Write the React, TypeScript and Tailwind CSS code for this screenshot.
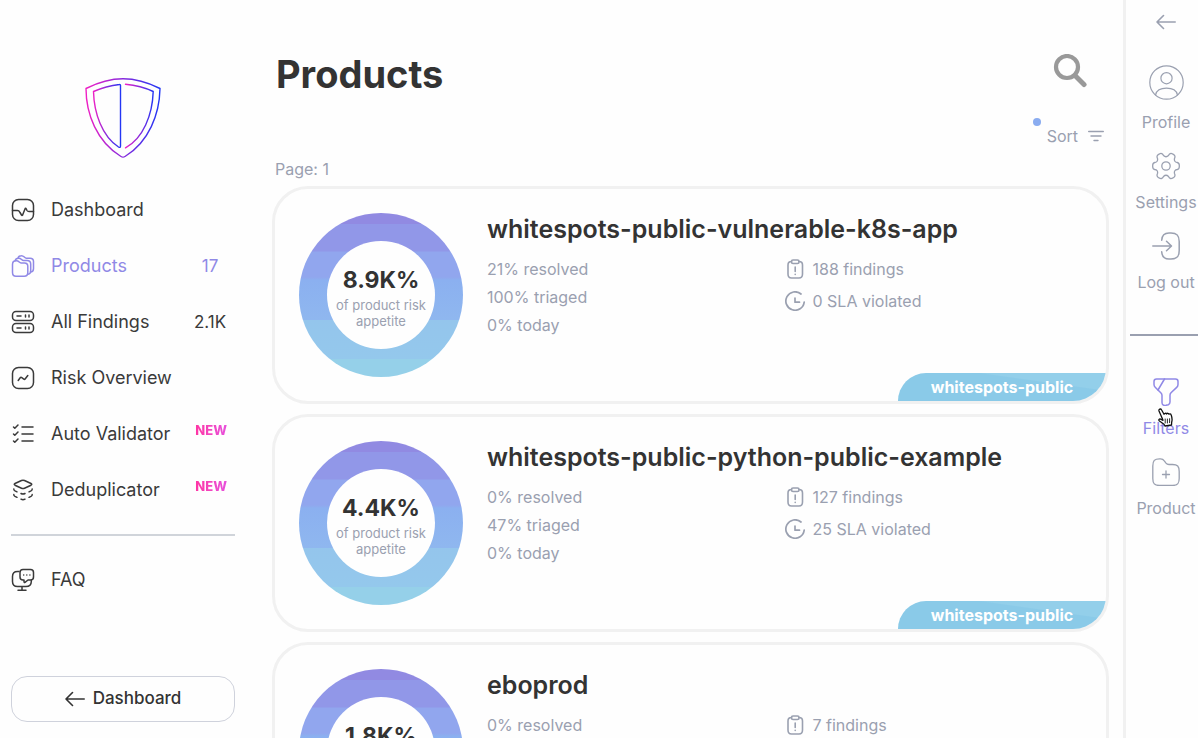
import type { ReactNode } from 'react';

type IconProps = { children: ReactNode; size?: string; weight?: number; box?: string };

function Icon({ children, size = 'size-6', weight = 1.5, box = '0 0 24 24' }: IconProps) {
  return (
    <svg
      viewBox={box}
      className={`${size} shrink-0`}
      fill="none"
      stroke="currentColor"
      strokeWidth={weight}
      strokeLinecap="round"
      strokeLinejoin="round"
      aria-hidden="true"
    >
      {children}
    </svg>
  );
}

function Logo() {
  return (
    <svg viewBox="0 0 76 80" className="h-20 w-[76px]" fill="none" strokeWidth="1.4" strokeLinejoin="round" strokeLinecap="round" aria-hidden="true">
      <defs>
        <linearGradient id="outer" gradientUnits="userSpaceOnUse" x1="1" y1="0" x2="75" y2="0">
          <stop offset="0" stopColor="#f01fc4" />
          <stop offset="1" stopColor="#2036f5" />
        </linearGradient>
        <linearGradient id="left" gradientUnits="userSpaceOnUse" x1="8" y1="0" x2="36" y2="0">
          <stop offset="0" stopColor="#f01fc4" />
          <stop offset="1" stopColor="#2036f5" />
        </linearGradient>
        <linearGradient id="right" gradientUnits="userSpaceOnUse" x1="40" y1="0" x2="69" y2="0">
          <stop offset="0" stopColor="#f01fc4" />
          <stop offset="1" stopColor="#2036f5" />
        </linearGradient>
      </defs>
      <path stroke="url(#outer)" d="M1 10.5C12 5 25 .8 38 .8S64 5 75 10.5C74.500 36 64 64 40 78.500Q38 79.800 36 78.500C12 64 1 36 1 10.500Z" />
      <path stroke="url(#left)" d="M34.500 6.500C25.500 7.500 16.500 10 8.500 13.500C9 35 17 58 33.500 69Q35.500 70.200 35.500 68V7.500Q35.500 6.300 34.500 6.500Z" />
      <path stroke="url(#right)" d="M40.500 6.200C50 7 60 9.500 68.200 13.500C67.500 37 58 60.500 40.500 69.800" />
    </svg>
  );
}

const icons = {
  dashboard: (
    <Icon>
      <rect x="1.500" y="1.500" width="21" height="21" rx="6" />
      <path d="M1.500 12.500H6.500C8 12.500 8.200 13 9 14.500L10.500 17C11 17.700 11.500 17.500 11.800 16.500L14 11C14.300 10.200 14.800 10 15.300 11L16 12.500C16.500 13.400 17 13.500 18 13.500H22.500" />
    </Icon>
  ),
  products: (
    <Icon>
      <path d="M1.500 10.500C1.500 8 2.700 6.800 5 6.800C8 6.500 8.200 9 10 9H13.500C15.700 9 16.800 10.100 16.800 12.300V18.500C16.800 21 15.700 22.300 13.200 22.300H5C2.700 22.300 1.500 21 1.500 18.500Z" />
      <path d="M4.200 6.700C4.500 5 5.700 4.200 7.500 4.200C10.300 4 10.600 6.500 12.500 6.500H16C18.400 6.500 19.700 7.600 19.700 10V16.500C19.700 18.700 18.800 20 17 20.200" />
      <path d="M7 4.200C7.300 2.500 8.500 1.700 10.300 1.700C13 1.500 13.400 4.200 15.300 4.200H19C21.300 4.200 22.500 5.300 22.500 7.500V14.500C22.500 16.500 21.700 17.700 20 18" />
    </Icon>
  ),
  findings: (
    <Icon>
      <rect x="1.500" y="1.500" width="21" height="9" rx="3.500" />
      <rect x="1.500" y="13.500" width="21" height="9" rx="3.500" />
      <path d="M6 6h4M14.500 5v2M18 5v2M6 18h4M14.500 17v2M18 17v2" />
    </Icon>
  ),
  risk: (
    <Icon>
      <rect x="1.500" y="1.500" width="21" height="21" rx="6" />
      <path d="M7.200 14.500L9.200 11.800Q10 10.900 10.800 11.700L12.800 13.200Q13.600 13.700 14.300 12.800L16.800 9.500" />
    </Icon>
  ),
  validator: (
    <Icon>
      <path d="M11 5h11M11 12h11M11 19h11M2.500 5l1.300 1.300L7 3M2.500 12l1.300 1.300L7 10M2.500 19l1.300 1.300L7 17" />
    </Icon>
  ),
  dedup: (
    <Icon>
      <path d="M10.500 2.500Q12 1.800 13.500 2.500L20 5.500Q21.500 6.300 20 7.200L13.500 10.200Q12 10.900 10.500 10.200L4 7.200Q2.500 6.300 4 5.500Z" />
      <path d="M2.800 11Q2.600 12 4 12.800L6 13.800M21.200 11Q21.400 12 20 12.800L18 13.800M10 15.500Q12 16.700 14 15.500M2.800 16.500Q2.600 17.500 4 18.300L6 19.300M21.200 16.500Q21.400 17.500 20 18.300L18 19.300M10 21.200Q12 22.400 14 21.200" />
    </Icon>
  ),
  faq: (
    <Icon>
      <path d="M8 3.500H6.500C3 3.500 1.500 5.200 1.500 8.500V13.500C1.500 17 3 18.500 6.500 18.500H15C18.500 18.500 20.300 17 20.300 13.500V12.500M11 18.500V22.200M7 22.200h8" />
      <path d="M12 1.500H19.500Q22.500 1.500 22.500 4.500V9Q22.500 12 19.500 12H17L14 14.300Q13 14.800 13 13.500V12H12Q9 12 9 9V4.500Q9 1.500 12 1.500Z" />
      <path d="M12.700 7h.01M15.800 7h.01M18.900 7h.01" />
    </Icon>
  ),
};

const navItems = [
  { label: 'Dashboard', icon: icons.dashboard },
  { label: 'Products', icon: icons.products, count: '17', active: true },
  { label: 'All Findings', icon: icons.findings, count: '2.1K' },
  { label: 'Risk Overview', icon: icons.risk },
  { label: 'Auto Validator', icon: icons.validator, fresh: true },
  { label: 'Deduplicator', icon: icons.dedup, fresh: true },
];

type NavProps = { label: string; icon: ReactNode; count?: string; active?: boolean; fresh?: boolean };

function NavLink({ label, icon, count, active, fresh }: NavProps) {
  return (
    <a
      href="#"
      aria-current={active ? 'page' : undefined}
      className={`flex h-14 items-center text-lg ${active ? 'text-[#9089e6]' : 'text-[#3a3a3a]'}`}
    >
      {icon}
      <span className="ml-4 flex-1 whitespace-nowrap">{label}</span>
      {count && <span className="w-[50px] text-center text-[17px]">{count}</span>}
      {fresh && (
        <span className="mr-2 mb-2 bg-linear-to-r from-[#ff34a4] to-[#e750dc] bg-clip-text text-[13px] font-extrabold text-transparent">
          NEW
        </span>
      )}
    </a>
  );
}

function BackArrow() {
  return (
    <Icon size="h-4 w-5" box="0 0 20 16" weight={1.6}>
      <path d="M19.200 8H1M7.500 1.500L1 8L7.500 14.500" />
    </Icon>
  );
}

const products = [
  { name: 'whitespots-public-vulnerable-k8s-app', risk: '8.9K%', resolved: '21%', triaged: '100%', findings: '188', sla: '0' },
  { name: 'whitespots-public-python-public-example', risk: '4.4K%', resolved: '0%', triaged: '47%', findings: '127', sla: '25' },
  { name: 'eboprod', risk: '1.8K%', resolved: '0%', triaged: '0%', findings: '7', sla: '0' },
];

function ProductCard({ product }: { product: (typeof products)[number] }) {
  return (
    <article className="relative flex shrink-0 gap-6 overflow-hidden rounded-[36px] border-3 border-[#f1f1f1] p-6">
      <div className="flex size-[164px] shrink-0 items-center justify-center rounded-full bg-[linear-gradient(#918ae2_7%,#9197e8_7%,#9197e8_23%,#91a6ee_24%,#91a6ee_39%,#8bb0f0_41%,#8fb7ef_65%,#94c5ec_65%,#94c8ec_89%,#95d0e9_89%)]">
        <div className="flex size-[108px] flex-col items-center justify-center gap-[3px] rounded-full bg-[#fefefe] pt-1 text-center">
          <strong className="text-[23px] leading-7 font-bold">{product.risk}</strong>
          <span className="text-[13px] leading-4 text-[#9aa0b0]">
            of product risk
            <br />
            appetite
          </span>
        </div>
      </div>
      <div className="min-w-0 flex-1">
        <h2 className="text-[25px] leading-8 font-semibold whitespace-nowrap">{product.name}</h2>
        <div className="mt-2 grid grid-cols-2 text-base text-[#9aa0b0]">
          <ul className="pt-0.5 leading-7">
            <li>{product.resolved} resolved</li>
            <li>{product.triaged} triaged</li>
            <li>0% today</li>
          </ul>
          <ul className="leading-8">
            <li className="flex items-center gap-2">
              <Icon size="size-5" box="0 0 20 20" weight={1.6}>
                <path d="M6.500 2.500C4 2.500 3 3.500 3 6V15C3 17.700 4 19 6.500 19H14C16.500 19 17.500 17.700 17.500 15V6C17.500 3.500 16.500 2.500 14 2.500" />
                <rect x="6.500" y="1" width="7.500" height="3.500" rx="1.500" />
                <path d="M10.200 8v4.500M10.200 15.400v.1" />
              </Icon>
              {product.findings} findings
            </li>
            <li className="flex items-center gap-2">
              <Icon size="size-5" box="0 0 20 20" weight={1.7}>
                <path d="M16 3A9.200 9.200 0 1 0 19.200 11" />
                <path d="M10 7v4.200h4.500" />
              </Icon>
              {product.sla} SLA violated
            </li>
          </ul>
        </div>
      </div>
      <a
        href="#"
        className="absolute right-0 bottom-0 flex h-7 w-52 items-center justify-center rounded-tl-[28px] bg-[linear-gradient(188deg,#93cfea_30%,#8acae8_32%)] text-base font-bold text-white"
      >
        whitespots-public
      </a>
    </article>
  );
}

function RailItem({ label, children, active }: { label: string; children: ReactNode; active?: boolean }) {
  return (
    <a href="#" className={`relative flex flex-col items-center gap-2.5 text-base leading-6 ${active ? 'text-[#9089e6]' : 'text-[#9aa0b0]'}`}>
      {children}
      <span className="whitespace-nowrap">{label}</span>
    </a>
  );
}

function HandPointer() {
  return (
    <svg viewBox="0 0 15 19" className="absolute top-[30px] left-8 h-[19px] w-[15px]" fill="#fff" stroke="#111" strokeWidth="1.300" strokeLinejoin="round" strokeLinecap="round" aria-hidden="true">
      <path d="M4.300 10.500L1 3C.5 1.200 2.700 .2 3.500 1.800L6 6.300C6.300 5.100 7.900 4.900 8.500 6C9 5 10.400 5 10.900 6.200C11.600 5.500 12.900 5.900 13.200 7C14.200 9.700 14.400 11.700 13.700 14L13.500 17L7 18L6 16.200L1.400 13C.2 11.900 1.300 10.600 2.700 11.200L5 12.300Z" />
      <path d="M7.200 11v4M9.400 11v4M11.600 10.700v4" strokeWidth=".9" />
    </svg>
  );
}

export default function App() {
  return (
    <div className="flex h-screen overflow-hidden bg-[#fefefe] font-['Inter',sans-serif] text-[#333]">
      <aside className="flex w-[246px] shrink-0 flex-col px-[11px] pt-[78px] pb-4">
        <a href="#" aria-label="Home" className="self-center">
          <Logo />
        </a>
        <nav className="mt-6">
          {navItems.map((item) => (
            <NavLink key={item.label} {...item} />
          ))}
          <hr className="my-4 border-t-2 border-[#d0d4da]" />
          <NavLink label="FAQ" icon={icons.faq} />
        </nav>
        <button type="button" className="mt-auto flex h-[46px] items-center justify-center gap-2 rounded-2xl border border-[#cfd2dc] text-[17px] font-medium">
          <BackArrow />
          Dashboard
        </button>
      </aside>

      <main className="flex min-w-0 flex-1 flex-col pt-12 pr-3.5 pl-[26px]">
        <header className="flex shrink-0 items-start justify-between pr-[22px] pl-1">
          <h1 className="text-[38px] leading-[52px] font-bold">Products</h1>
          <button type="button" aria-label="Search" className="mt-1.5 text-[#999]">
            <Icon size="size-[34px]" box="0 0 34 34" weight={4.200}>
              <circle cx="14" cy="13" r="11" />
              <path d="M22 21.500L31 30.500" strokeWidth="5" />
            </Icon>
          </button>
        </header>
        <div className="mt-6 flex shrink-0 justify-end pr-[5px] text-[#9aa0b0]">
          <button type="button" className="relative flex items-center gap-2.5 text-base leading-6">
            <span className="absolute -top-1.5 -left-3.5 size-2 rounded-full bg-[#8aacf0]" />
            Sort
            <Icon size="h-3 w-4" box="0 0 16 12" weight={1.400}>
              <path d="M.7 1.500h14.600M3 6h10M6 10.500h4" />
            </Icon>
          </button>
        </div>
        <p className="mt-[9px] mb-[5px] shrink-0 pl-[3px] text-base leading-6 text-[#9aa0b0]">Page: 1</p>
        <section aria-label="Product list" className="flex flex-col gap-2.5">
          {products.map((product) => (
            <ProductCard key={product.name} product={product} />
          ))}
        </section>
      </main>

      <aside className="w-[75px] shrink-0 border-l-3 border-[#f1f1f1]">
        <div className="flex w-20 flex-col pt-3.5">
          <button type="button" aria-label="Collapse" className="mb-[35px] self-center text-[#9aa0b0]">
            <BackArrow />
          </button>
          <nav className="flex flex-col gap-[18px]">
            <RailItem label="Profile">
              <Icon size="size-[35px]" box="0 0 35 35" weight={1.200}>
                <circle cx="17.500" cy="17.500" r="16.700" />
                <circle cx="17.500" cy="13.200" r="5.600" />
                <path d="M6.500 30C7.500 25.500 12 23.200 17.500 23.200S27.500 25.500 28.500 30" />
              </Icon>
            </RailItem>
            <RailItem label="Settings">
              <Icon size="size-7" box="0 0 28 28" weight={1.300}>
                <circle cx="14" cy="14" r="4.200" />
                <path d="M11.500 3.500Q14 6 16.500 3.500Q18 .5 20.500 1.800Q24 3.500 22.500 6.500Q21.800 10 25.300 10.500Q27.500 11 27.300 14Q27.500 17 25.300 17.500Q21.800 18 22.500 21.500Q24 24.500 20.500 26.200Q18 27.500 16.500 24.500Q14 22 11.500 24.500Q10 27.500 7.500 26.200Q4 24.500 5.500 21.500Q6.200 18 2.700 17.500Q.5 17 .7 14Q.5 11 2.700 10.500Q6.200 10 5.500 6.500Q4 3.500 7.500 1.800Q10 .5 11.500 3.500Z" />
              </Icon>
            </RailItem>
            <RailItem label="Log out">
              <Icon size="size-7" box="0 0 28 28" weight={1.500}>
                <path d="M.800 14H19M14.500 9.200L19.500 14L14.500 18.800" />
                <path d="M9.700 8.200C10 3.200 12 1 17 1H19C25 1 27.200 3.500 27.200 9.500V18.500C27.200 24.500 25 27 19 27H17C12 27 10 24.800 9.700 19.800" />
              </Icon>
            </RailItem>
          </nav>
          <hr className="mt-10 mb-[42px] ml-1 border-t-2 border-[#9aa0b0]" />
          <nav className="flex flex-col gap-[18px]">
            <RailItem label="Filters" active>
              <Icon size="size-7" box="0 0 28 28" weight={1.500}>
                <path d="M4.500 1H23.500Q26 1 26 3.500V6.500Q26 8.200 24.700 9.400L19 14.800Q18 15.800 18 17.300V24Q18 26 16.300 26.700L14 27.300Q10 28 10 24.500V17.500Q10 16 9 15L3.200 9.200Q2 8 2 6.500V3.500Q2 1 4.500 1Z" />
                <path d="M12.500 1L6 12" />
              </Icon>
              <HandPointer />
            </RailItem>
            <RailItem label="Product">
              <Icon size="size-7" box="0 0 28 28" weight={1.300}>
                <path d="M.8 8C.8 2.500 2.500 .8 7.500 .8H8.500Q11 .8 12.300 2.800L14 5.200Q15 6.500 17 6.500H20.500C25.500 6.500 27.200 8.200 27.200 13.500V20.500C27.200 25.500 25.500 27.500 20.500 27.500H7.500C2.500 27.500 .8 25.500 .8 20.500Z" />
                <path d="M14 13v7M10.500 16.500h7" />
              </Icon>
            </RailItem>
          </nav>
        </div>
      </aside>
    </div>
  );
}
